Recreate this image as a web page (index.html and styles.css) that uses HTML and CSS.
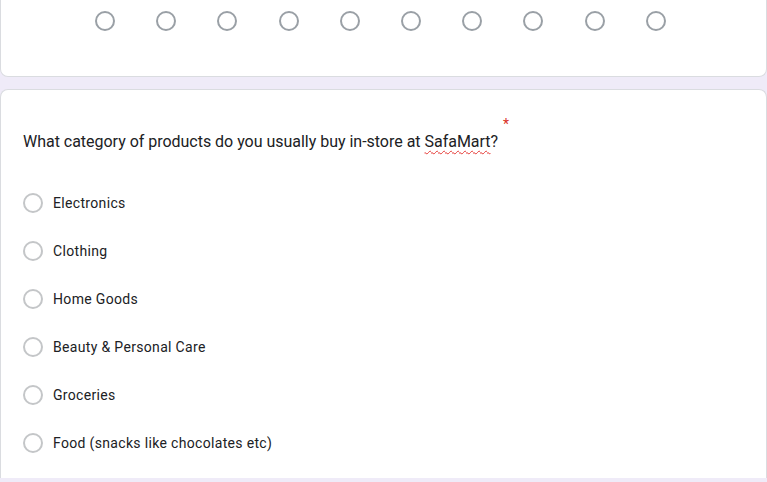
FILE: index.html
```html
<!DOCTYPE html>
<html>
<head>
<meta charset="utf-8">
<link rel="stylesheet" href="styles.css">
</head>
<body>
<div class="card card-top">
  <div class="scale">
    <span class="dot"></span><span class="dot"></span><span class="dot"></span><span class="dot"></span><span class="dot"></span>
    <span class="dot"></span><span class="dot"></span><span class="dot"></span><span class="dot"></span><span class="dot"></span>
  </div>
</div>
<div class="card card-q">
  <div class="title">What category of products do you usually buy in-store at <span class="spell">SafaMart</span>?<span class="req">*</span></div>
  <div class="options">
    <div class="opt"><span class="radio"></span><span class="label">Electronics</span></div>
    <div class="opt"><span class="radio"></span><span class="label">Clothing</span></div>
    <div class="opt"><span class="radio"></span><span class="label">Home Goods</span></div>
    <div class="opt"><span class="radio"></span><span class="label">Beauty &amp; Personal Care</span></div>
    <div class="opt"><span class="radio"></span><span class="label">Groceries</span></div>
    <div class="opt"><span class="radio"></span><span class="label">Food (snacks like chocolates etc)</span></div>
  </div>
</div>
</body>
</html>
```
FILE: styles.css
```css
html, body {
  margin: 0;
  padding: 0;
  background: #efebf8;
  font-family: Roboto, "Liberation Sans", sans-serif;
  color: #202124;
  overflow: hidden;
}
.card {
  background: #fff;
  border: 1px solid #dadce0;
  box-sizing: border-box;
}
.card-top {
  height: 77px;
  border-top: none;
  border-radius: 0 0 8px 8px;
  padding: 11px 0 0 94px;
}
.scale {
  display: flex;
  gap: 41.2px;
}
.dot {
  width: 20px;
  height: 20px;
  box-sizing: border-box;
  border: 2px solid #9aa0a6;
  border-radius: 50%;
}
.card-q {
  margin-top: 12px;
  height: 389px;
  border-bottom: none;
  border-radius: 8px 8px 0 0;
  padding: 40px 22px 0 22px;
}
.title {
  position: relative;
  display: inline-block;
  font-size: 16px;
  line-height: 24px;
  letter-spacing: -0.02px;
  padding-right: 11px;
}
.spell {
  text-decoration: underline wavy #e53935;
  text-decoration-thickness: 1px;
  text-underline-offset: 3px;
}
.req {
  position: absolute;
  right: 0;
  top: -18px;
  color: #d93025;
  font-size: 14px;
}
.options {
  display: flex;
  flex-direction: column;
  margin-top: 25px;
}
.opt {
  display: flex;
  align-items: center;
  height: 48px;
  gap: 10px;
}
.radio {
  width: 20px;
  height: 20px;
  box-sizing: border-box;
  border: 2px solid #c4c6c8;
  border-radius: 50%;
}
.label {
  font-size: 14px;
  letter-spacing: 0.33px;
}
```
